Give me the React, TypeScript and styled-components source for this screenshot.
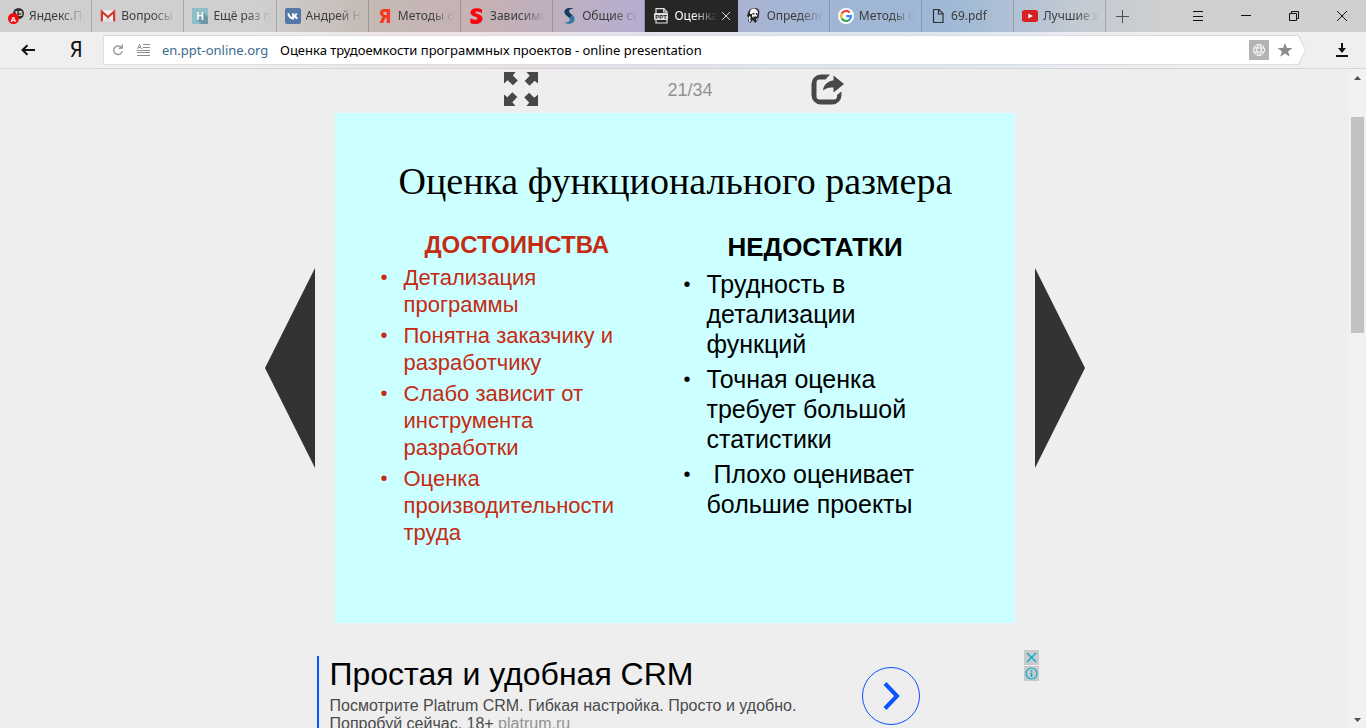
import React from 'react';
import styled, { createGlobalStyle } from 'styled-components';

const GlobalStyle = createGlobalStyle`
  * { box-sizing: border-box; }
  html, body { margin: 0; height: 100%; overflow: hidden; background: #eeeeee; }
  button { border: 0; padding: 0; margin: 0; background: none; color: inherit; font: inherit; cursor: pointer; }
  a { color: inherit; text-decoration: none; }
  svg { display: block; flex: none; }
`;

const uiFont = `'Noto Sans', 'Open Sans', sans-serif`;
const pageFont = `'Liberation Sans', Arial, sans-serif`;

const Browser = styled.div`
  display: flex;
  flex-direction: column;
  height: 100vh;
  overflow: hidden;
  font-family: ${uiFont};
`;

const TabStrip = styled.header`
  display: flex;
  flex: none;
  height: 32px;
  background: linear-gradient(90deg, #cfcfcf 0%, #cfcfcf 19%, #c5bab5 27%, #c5b1b5 36%, #b6aed0 47%, #a9b4d4 55%, #9fb6d4 62%, #a0b9d5 70%, #c3cad3 79%, #cecfd0 85%, #d0d0d0 100%);
`;

const Tabs = styled.nav`
  display: grid;
  grid-template-columns: repeat(12, minmax(0, 1fr));
  flex: 0 0 81%;
`;

const Tab = styled.div<{ $active?: boolean }>`
  display: flex;
  align-items: center;
  gap: 4px;
  padding: 0 6px 0 8px;
  min-width: 0;
  border-right: 1px solid ${p => (p.$active ? '#262626' : 'rgba(90, 90, 100, 0.35)')};
  background: ${p => (p.$active ? '#262626' : 'transparent')};
  color: ${p => (p.$active ? '#ffffff' : '#3c3c3c')};
  font-size: 12px;
  line-height: 16px;
`;

const TabLink = styled.a`
  display: flex;
  flex: 1;
  align-items: center;
  gap: 5px;
  min-width: 0;
`;

const TabTitle = styled.span`
  flex: 1;
  overflow: hidden;
  white-space: nowrap;
  mask-image: linear-gradient(90deg, #000 calc(100% - 24px), transparent 100%);
`;

const TabClose = styled.button`
  flex: none;
`;

const NewTab = styled.button`
  display: grid;
  place-items: center;
  width: 32px;
  color: #505050;
`;

const WindowButtons = styled.div`
  display: flex;
  margin-left: auto;
`;

const WindowButton = styled.button`
  display: grid;
  place-items: center;
  width: 48px;
  color: #111111;
`;

const Toolbar = styled.div`
  display: flex;
  align-items: center;
  flex: none;
  height: 37px;
  border-bottom: 1px solid #d4d5d8;
  background: linear-gradient(90deg, #efefef 0%, #efefef 19%, #ece5e3 28%, #ebe1e4 38%, #e4e1ee 47%, #e0e5ef 56%, #dee6f0 70%, #ebedf0 79%, #efefef 86%);
`;

const ToolButton = styled.button<{ $width: number }>`
  display: grid;
  place-items: center;
  flex: none;
  width: ${p => p.$width}px;
  height: 28px;
  color: #111111;
`;

const HomeLetter = styled.span`
  font-family: 'Liberation Sans Narrow', 'DejaVu Sans Condensed', sans-serif;
  font-size: 21px;
  line-height: 28px;
`;

const AddressFrame = styled.div`
  flex: 1;
  height: 30px;
  margin-left: 7px;
  padding: 1px;
  background: #d9dce0;
  clip-path: polygon(0 0, calc(100% - 7px) 0, 100% 50%, calc(100% - 7px) 100%, 0 100%);
`;

const AddressBar = styled.div`
  display: flex;
  align-items: center;
  height: 28px;
  padding: 0 12px 0 8px;
  background: #ffffff;
  clip-path: polygon(0 0, calc(100% - 7px) 0, 100% 50%, calc(100% - 7px) 100%, 0 100%);
  font-size: 13px;
  line-height: 18px;
`;

const AddressIcons = styled.div`
  display: flex;
  align-items: center;
  gap: 13px;
  width: 50px;
  color: #8d8d8d;
`;

const Host = styled.label`
  width: 118px;
  color: #3b6a90;
`;

const AddressInput = styled.input`
  flex: 1;
  min-width: 0;
  height: 24px;
  border: 0;
  padding: 0;
  outline: 0;
  background: transparent;
  color: #000000;
  font: 13px/18px ${uiFont};
`;

const BarButton = styled.button`
  display: flex;
  margin-left: 8px;
`;

const Viewport = styled.div`
  display: flex;
  flex: 1;
  min-height: 0;
`;

const Page = styled.main`
  display: flex;
  flex: 1;
  flex-direction: column;
  align-items: center;
  min-width: 0;
  overflow: hidden;
  background: #eeeeee;
  font-family: ${pageFont};
`;

const ViewerBar = styled.div`
  display: grid;
  flex: none;
  grid-template-columns: 164px 143px 35px;
  align-items: center;
  height: 44px;
  padding-bottom: 4px;
  color: #484848;
`;

const Counter = styled.span`
  padding-top: 2px;
  color: #929292;
  font-size: 18px;
  line-height: 20px;
`;

const Viewer = styled.section`
  display: flex;
  flex: none;
  align-items: center;
  gap: 20px;
`;

const Slide = styled.article`
  width: 680px;
  min-height: 510px;
  padding: 46px 20px 0 44px;
  background: #ccffff;
`;

const SlideTitle = styled.h1`
  margin: 0 0 30px 20px;
  font: 400 38px/44px 'Liberation Serif', 'Times New Roman', serif;
  color: #000000;
`;

const Columns = styled.div`
  display: grid;
  grid-template-columns: 303px 1fr;
`;

const Heading = styled.h2<{ $large?: boolean }>`
  margin: 0 0 ${p => (p.$large ? 8 : 7)}px 46px;
  font-size: ${p => (p.$large ? 26 : 24)}px;
  line-height: ${p => (p.$large ? 28 : 24)}px;
  font-weight: 700;
`;

const Column = styled.section<{ $accent?: boolean }>`
  color: ${p => (p.$accent ? '#c42b12' : '#000000')};
`;

const List = styled.ul<{ $large?: boolean }>`
  display: grid;
  gap: ${p => (p.$large ? 5 : 4)}px;
  margin: 0;
  padding: 0;
  list-style: none;
  font-size: ${p => (p.$large ? 25 : 22)}px;
  line-height: ${p => (p.$large ? 30 : 27)}px;
`;

const Item = styled.li`
  display: grid;
  grid-template-columns: 25px 1fr;

  &::before {
    content: '•';
    padding-left: 2px;
    font-size: 20px;
  }
`;

const ItemText = styled.span`
  white-space: pre;
`;

const Ad = styled.aside`
  display: flex;
  flex: none;
  width: 728px;
  margin-top: 27px;
`;

const AdBody = styled.a`
  display: block;
  width: 545px;
  margin: 6px 0 0 6px;
  padding-left: 11px;
  border-left: 2px solid #0a54ff;
  color: #4a4a4a;
  font-size: 16px;
  line-height: 18px;
`;

const AdTitle = styled.strong`
  display: block;
  margin-bottom: 4px;
  color: #000000;
  font-weight: 400;
  font-size: 32px;
  line-height: 37px;
`;

const AdText = styled.span`
  display: block;
  white-space: nowrap;
`;

const AdDomain = styled.span`
  color: #929292;
`;

const AdGo = styled.button`
  display: grid;
  place-items: center;
  width: 58px;
  height: 58px;
  margin-top: 17px;
  border: 1px solid #0a54ff;
  border-radius: 50%;
`;

const AdChoices = styled.div`
  display: grid;
  gap: 1px;
  align-content: start;
  margin-left: auto;
`;

const AdChoice = styled.button`
  display: grid;
  place-items: center;
  width: 15px;
  height: 15px;
  background: #cacaca;
`;

const ScrollBar = styled.div`
  display: grid;
  grid-template-rows: 17px 31fr 216fr 378fr 17px;
  flex: none;
  width: 17px;
  background: #f1f1f1;
  color: #505050;
`;

const ScrollArrow = styled.button<{ $row: number }>`
  display: grid;
  grid-row: ${p => p.$row};
  place-items: center;
`;

const Thumb = styled.div`
  grid-row: 3;
  margin: 0 2px;
  background: #c1c1c1;
`;

const icon = (children: React.ReactNode) => (
  <svg width="16" height="16" viewBox="0 0 16 16" aria-hidden="true">{children}</svg>
);

const letter = (x: number, y: number, size: number, fill: string, text: string, family = 'Liberation Sans') => (
  <text x={x} y={y} fontSize={size} fontWeight="700" fill={fill} textAnchor="middle" fontFamily={family}>{text}</text>
);

const favicons = {
  antiplagiat: icon(<>
    <circle cx="10.5" cy="5.5" r="5.5" fill="#2e2e2e" />
    {letter(10.5, 8, 7, '#e8e8e8', '15')}
    <circle cx="5.5" cy="10.5" r="5.5" fill="#f40b0b" />
    {letter(5.5, 13.5, 8, '#ffffff', 'A')}
  </>),
  gmail: icon(<>
    <path d="M1 2.5h14v11H1z" fill="#f4f1f0" />
    <path d="M3 13.5 8 8.6l5 4.9z" fill="#dedada" />
    <path d="M1.900 13.500V3.700L8 9l6.100-5.300v9.800" fill="none" stroke="#d5392e" strokeWidth="2.200" />
  </>),
  habr: icon(<>
    <path d="M0 0h16v16H0z" fill="#8fbdc8" />
    <path d="m11 4 5 5v7H9l-4-4z" fill="#6c97a5" />
    {letter(8, 12, 10, '#ffffff', 'H')}
  </>),
  vk: icon(<>
    <rect width="16" height="16" rx="2" fill="#5378a5" />
    <path d="M3.200 5.300c.8 3.500 2.200 5 4.900 5.200V5.300M8.200 8c2-.2 2.900-1.100 3.500-2.700M8.200 8c2 .2 3 .8 4 2.700" fill="none" stroke="#fff" strokeWidth="1.900" />
  </>),
  yandex: icon(letter(8, 15, 19, '#f5371c', 'Я', 'Liberation Sans Narrow, DejaVu Sans Condensed')),
  redS: icon(<path d="M13 1.500C9-.9 1.500-.2 1.500 4.500c0 4.500 7 3.800 7 6 0 1.800-4 1.500-7.200-.3V15c4.200 2.200 12.200 1 12.200-4.600 0-4.900-7-4-7-6 0-1.500 3.700-1 6.500.7z" fill="#f8070c" />),
  blueS: icon(<>
    <path d="M12.500.3C8-.9 3.500.5 3.500 4c0 3.500 5.300 4.600 5.300 7.500 0 2.300-2.200 3-5.500 2.800 4.500 3.400 10.600 1 10.200-3.700C13.200 6.600 8 5.800 8 3.100 8 1.600 10 1 12.500.3z" fill="#2f79a4" />
    <path d="M12.500.3C8-.9 3.500.5 3.500 4c0 2.700 3.500 4 4.800 5.800L11 7.500C9.500 6.100 8 5 8 3.100 8 1.600 10 1 12.500.3z" fill="#183c5d" />
  </>),
  ppt: icon(<>
    <path d="M3 5V.7h8L14 4v1M3 12v3h11v-3M10.700.8V4H14" fill="none" stroke="#dddddd" strokeWidth="1.200" />
    <rect x="1" y="5" width="14" height="7" rx="1" fill="#dddddd" />
    {letter(8, 11, 6, '#262626', 'PPT')}
  </>),
  portrait: icon(<>
    <path d="M2 5C3 1 6 0 9 0c4 0 5 3 4 7l-1 5-3 3-2-3-3 3-2-2 1-3-2-2z" fill="#262626" />
    <path d="M4 3c2-4 7-3 8 1l-1 4-2 2-3-1V6L4 6z" fill="#f3f3f3" />
    <path d="M6.500 5h2v1.500h-2zm3.500 0h1v2h-1zM7 8l2 1 1-1v2H8z" fill="#222222" />
    <path d="m3 8 2 1-1 2 1 1-1 2H3zM10 11l2-1-1 3z" fill="#eeeeee" />
  </>),
  google: icon(<>
    <circle cx="8" cy="8" r="8" fill="#ffffff" />
    <g fill="none" strokeWidth="2.200">
      <path d="M11.700 4.500A5 5 0 0 0 3.600 5.800" stroke="#ea4335" />
      <path d="M3.600 5.800a5 5 0 0 0 0 4.500" stroke="#fbbc05" />
      <path d="M3.600 10.300a5 5 0 0 0 7.700 1.500" stroke="#34a853" />
      <path d="M11.300 11.800A5 5 0 0 0 13 8.100H8.200" stroke="#4285f4" />
    </g>
  </>),
  file: icon(<path d="M3.500 1.500h5.500l4 4v9H3.500zM8.500 1.500v4.500H13" fill="none" stroke="#303030" strokeWidth="1.200" />),
  youtube: icon(<>
    <rect y="2" width="16" height="12" rx="2.500" fill="#d62022" />
    <path d="m6.300 5.500 4.500 2.500-4.500 2.500z" fill="#ffffff" />
  </>),
};

const tabs: { title: string; icon: keyof typeof favicons; active?: boolean }[] = [
  { title: 'Яндекс.Почта', icon: 'antiplagiat' },
  { title: 'Вопросы', icon: 'gmail' },
  { title: 'Ещё раз про', icon: 'habr' },
  { title: 'Андрей Ник', icon: 'vk' },
  { title: 'Методы оценки', icon: 'yandex' },
  { title: 'Зависимость', icon: 'redS' },
  { title: 'Общие сведения', icon: 'blueS' },
  { title: 'Оценка', icon: 'ppt', active: true },
  { title: 'Определение', icon: 'portrait' },
  { title: 'Методы оценки', icon: 'google' },
  { title: '69.pdf', icon: 'file' },
  { title: 'Лучшие хиты', icon: 'youtube' },
];

const advantages = [
  'Детализация\nпрограммы',
  'Понятна заказчику и\nразработчику',
  'Слабо зависит от\nинструмента\nразработки',
  'Оценка\nпроизводительности\nтруда',
];

const drawbacks = [
  'Трудность в\nдетализации\nфункций',
  'Точная оценка\nтребует большой\nстатистики',
  ' Плохо оценивает\nбольшие проекты',
];

export default function App() {
  return (
    <Browser>
      <GlobalStyle />
      <TabStrip>
        <Tabs aria-label="Вкладки">
          {tabs.map((t, i) => (
            <Tab key={i} $active={t.active}>
              <TabLink href="#">
                {favicons[t.icon]}
                <TabTitle>{t.title}</TabTitle>
              </TabLink>
              {t.active && (
                <TabClose aria-label="Закрыть вкладку">
                  <svg width="10" height="10" viewBox="0 0 10 10"><path d="m1 1 8 8M9 1 1 9" stroke="#d8d8d8" /></svg>
                </TabClose>
              )}
            </Tab>
          ))}
        </Tabs>
        <NewTab aria-label="Новая вкладка">
          <svg width="13" height="13" viewBox="0 0 13 13"><path d="M6.500 0v13M0 6.500h13" stroke="currentColor" /></svg>
        </NewTab>
        <WindowButtons>
          <WindowButton aria-label="Меню">
            <svg width="10" height="10" viewBox="0 0 10 10"><path d="M0 .5h10M0 5.500h10M0 9.500h10" stroke="currentColor" /></svg>
          </WindowButton>
          <WindowButton aria-label="Свернуть">
            <svg width="10" height="10" viewBox="0 0 10 10"><path d="M0 4.500h10" stroke="currentColor" /></svg>
          </WindowButton>
          <WindowButton aria-label="Восстановить">
            <svg width="10" height="10" viewBox="0 0 10 10"><path d="M.5 2.500h7v7h-7zM2.500 2.500v-2h7v7h-2" fill="none" stroke="currentColor" /></svg>
          </WindowButton>
          <WindowButton aria-label="Закрыть">
            <svg width="10" height="10" viewBox="0 0 10 10"><path d="m0 0 10 10M10 0 0 10" stroke="currentColor" /></svg>
          </WindowButton>
        </WindowButtons>
      </TabStrip>

      <Toolbar>
        <ToolButton $width={56} aria-label="Назад">
          <svg width="14" height="12" viewBox="0 0 14 12"><path d="M14 6H2M6.500 1.200 1.500 6l5 4.800" fill="none" stroke="currentColor" strokeWidth="2" /></svg>
        </ToolButton>
        <ToolButton $width={40} aria-label="Яндекс"><HomeLetter>Я</HomeLetter></ToolButton>
        <AddressFrame>
          <AddressBar>
            <AddressIcons>
              <svg width="12" height="12" viewBox="0 0 12 12"><path d="M9.300 3.400A4.300 4.300 0 1 0 10.300 7M6.500 4.100h3.700V.5" fill="none" stroke="currentColor" strokeWidth="1.300" /></svg>
              <svg width="13" height="12" viewBox="0 0 13 12">
                <path d="M6 .5h7M6 3.500h7M0 6.500h13M0 8.500h13M0 11.500h13" stroke="currentColor" />
                <path d="M.5 5 2.500.5l2 4.500M1.200 3.500h2.600" fill="none" stroke="currentColor" />
              </svg>
            </AddressIcons>
            <Host htmlFor="address">en.ppt-online.org</Host>
            <AddressInput id="address" readOnly value="Оценка трудоемкости программных проектов - online presentation" />
            <BarButton aria-label="Перевести">
              <svg width="20" height="20" viewBox="0 0 20 20">
                <path d="M0 0h20v20H0z" fill="#b3b3b3" />
                <g fill="none" stroke="#ffffff"><circle cx="10" cy="10" r="5.500" /><path d="M10 4.500c-3 3-3 8 0 11M10 4.500c3 3 3 8 0 11M5 8h10M5 12h10" /></g>
              </svg>
            </BarButton>
            <BarButton aria-label="В закладки">
              <svg width="16" height="16" viewBox="0 0 16 16"><path d="m8 1 2 5h5.500l-4.400 3.400 1.700 5.300L8 11.500l-4.800 3.200 1.700-5.300L.5 6H6z" fill="#8c8c8c" /></svg>
            </BarButton>
          </AddressBar>
        </AddressFrame>
        <ToolButton $width={60} aria-label="Загрузки">
          <svg width="36" height="14" viewBox="0 0 36 14"><path d="M24 0v8M18 13h12" stroke="currentColor" strokeWidth="2" /><path d="M20 5h8l-4 5z" fill="currentColor" /></svg>
        </ToolButton>
      </Toolbar>

      <Viewport>
        <Page>
          <ViewerBar>
            <button aria-label="Во весь экран">
              <svg width="34" height="34" viewBox="0 0 34 34" fill="currentColor">
                {[0, 90, 180, 270].map(angle => (
                  <path key={angle} transform={`rotate(${angle} 17 17)`} d="M0 0h11.500L8.800 3.400l5 5-4.900 4.900-5.200-5L0 11.500z" />
                ))}
              </svg>
            </button>
            <Counter>21/34</Counter>
            <button aria-label="Поделиться">
              <svg width="33" height="31" viewBox="0 0 33 31">
                <path d="M19 .5h-9A9.500 9.500 0 0 0 .5 10v11a9.500 9.500 0 0 0 9.500 9.500h11a9.500 9.500 0 0 0 9.500-9.500v-3.500L26 21v1.500a3 3 0 0 1-3 3H8.500a3 3 0 0 1-3-3v-14a3 3 0 0 1 3-3h6z" fill="currentColor" />
                <path d="M22.500 1.500 33 10l-10.500 8.500v-5c-4 0-7.500.5-10.500 3 .5-5.500 4.500-9.500 10.500-10z" fill="currentColor" />
              </svg>
            </button>
          </ViewerBar>

          <Viewer>
            <button aria-label="Предыдущий слайд">
              <svg width="50" height="200" viewBox="0 0 50 200"><path d="M50 0v200L0 100z" fill="#333333" /></svg>
            </button>
            <Slide>
              <SlideTitle>Оценка функционального размера</SlideTitle>
              <Columns>
                <Column $accent>
                  <Heading>ДОСТОИНСТВА</Heading>
                  <List>{advantages.map(t => <Item key={t}><ItemText>{t}</ItemText></Item>)}</List>
                </Column>
                <Column>
                  <Heading $large>НЕДОСТАТКИ</Heading>
                  <List $large>{drawbacks.map(t => <Item key={t}><ItemText>{t}</ItemText></Item>)}</List>
                </Column>
              </Columns>
            </Slide>
            <button aria-label="Следующий слайд">
              <svg width="50" height="200" viewBox="0 0 50 200"><path d="M0 0v200l50-100z" fill="#333333" /></svg>
            </button>
          </Viewer>

          <Ad>
            <AdBody href="#">
              <AdTitle>Простая и удобная CRM</AdTitle>
              <AdText>Посмотрите Platrum CRM. Гибкая настройка. Просто и удобно.</AdText>
              <AdText>Попробуй сейчас. 18+ <AdDomain>platrum.ru</AdDomain></AdText>
            </AdBody>
            <AdGo aria-label="Перейти">
              <svg width="18" height="28" viewBox="0 0 18 28"><path d="m3 1.500 12 12.500L3 26.500" fill="none" stroke="#0a54ff" strokeWidth="4" /></svg>
            </AdGo>
            <AdChoices>
              <AdChoice aria-label="Закрыть рекламу">
                <svg width="11" height="11" viewBox="0 0 11 11"><path d="m1 1 9 9M10 1l-9 9" stroke="#00aecd" strokeWidth="1.400" /></svg>
              </AdChoice>
              <AdChoice aria-label="О рекламе">
                <svg width="13" height="13" viewBox="0 0 13 13"><circle cx="6.500" cy="6.500" r="5.500" fill="none" stroke="#00aecd" strokeWidth="1.200" /><path d="M6.500 3v1.500M6.500 5.500V10" stroke="#00aecd" strokeWidth="1.600" /></svg>
              </AdChoice>
            </AdChoices>
          </Ad>
        </Page>
        <ScrollBar>
          <ScrollArrow $row={1} aria-label="Прокрутить вверх">
            <svg width="7" height="4" viewBox="0 0 7 4"><path d="M0 4h7L3.500 0z" fill="currentColor" /></svg>
          </ScrollArrow>
          <Thumb />
          <ScrollArrow $row={5} aria-label="Прокрутить вниз">
            <svg width="7" height="4" viewBox="0 0 7 4"><path d="M0 0h7L3.500 4z" fill="currentColor" /></svg>
          </ScrollArrow>
        </ScrollBar>
      </Viewport>
    </Browser>
  );
}
